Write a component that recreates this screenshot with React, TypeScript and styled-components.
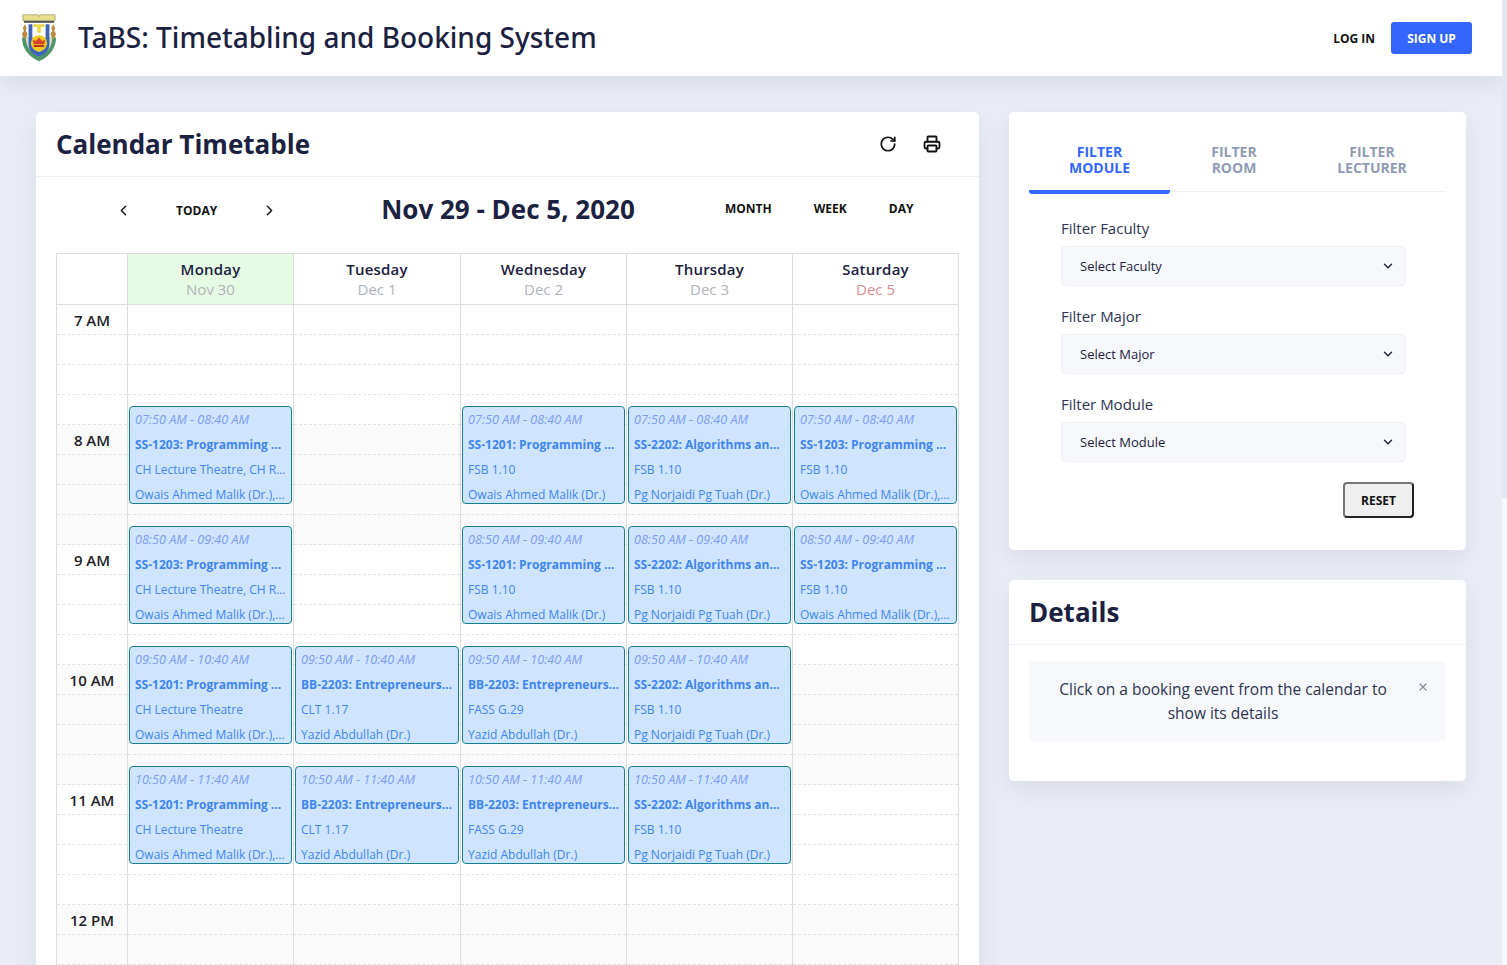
import React from "react";
import styled, { createGlobalStyle } from "styled-components";
import { ChevronDown, ChevronLeft, ChevronRight, Printer, RotateCw, X } from "lucide-react";

const GlobalStyle = createGlobalStyle`
  html, body {
    margin: 0;
    height: 100%;
    overflow: hidden;
  }
  * {
    box-sizing: border-box;
  }
  body {
    font-family: "Open Sans", "Noto Sans", sans-serif;
    color: #1b2140;
  }
`;

const Shell = styled.div`
  height: 100vh;
  display: flex;
  overflow: hidden;
`;

const Page = styled.div`
  flex: 1;
  min-width: 0;
  overflow: hidden;
  background: #eaedf6;
`;

const ScrollRail = styled.div`
  width: 5px;
  flex-shrink: 0;
  background: #f6f8fd;
`;

const ScrollThumb = styled.div`
  height: 498px;
  background: #e4e7f0;
`;

const TopBar = styled.header`
  height: 76px;
  background: white;
  display: flex;
  align-items: center;
  padding: 0 30px 0 21px;
  box-shadow: 0 4px 24px rgba(60, 70, 100, 0.14);
  position: relative;
`;

const Brand = styled.div`
  font-family: "Noto Sans", sans-serif;
  font-size: 28px;
  font-weight: 500;
  margin-left: 21px;
  margin-top: -2px;
  flex: 1;
`;

const LogIn = styled.button`
  background: none;
  border: none;
  font: 700 12px "Open Sans", sans-serif;
  color: #111;
  margin-right: 16px;
  padding: 0;
`;

const SignUp = styled.button`
  width: 81px;
  height: 32px;
  border: none;
  border-radius: 3px;
  background: #3366ff;
  color: white;
  font: 700 12px "Open Sans", sans-serif;
`;

const Content = styled.main`
  display: grid;
  grid-template-columns: 943px 457px;
  gap: 30px;
  align-items: start;
  padding: 36px 36px 40px;
`;

const Card = styled.section`
  background: white;
  border-radius: 5px;
  box-shadow: 0 8px 24px rgba(60, 70, 100, 0.1);
`;

const SideColumn = styled.div`
  display: flex;
  flex-direction: column;
  gap: 30px;
`;

const CardHead = styled.div`
  height: 65px;
  display: flex;
  align-items: center;
  padding: 0 25px 0 20px;
  border-bottom: 1px solid #eef0f7;
`;

const CardTitle = styled.h2`
  margin: 0;
  flex: 1;
  font-size: 26px;
  font-weight: 700;
`;

const IconButton = styled.button`
  background: none;
  border: none;
  padding: 0;
  width: 44px;
  display: flex;
  justify-content: center;
  color: #111;
`;

const CalendarBar = styled.div`
  height: 76px;
  padding: 0 20px 12px;
  display: grid;
  grid-template-columns: 272px 360px 1fr;
  align-items: center;
`;

const NavGroup = styled.div`
  display: flex;
  align-items: center;
  gap: 44px;
  padding-left: 59px;
  margin-top: 2px;
`;

const NavChevron = styled.button`
  background: none;
  border: none;
  padding: 0;
  display: flex;
  color: #111;
`;

const BarButton = styled.button`
  background: none;
  border: none;
  padding: 0;
  font: 700 12px "Open Sans", sans-serif;
  color: #111;
`;

const RangeTitle = styled.h3`
  margin: 0;
  font-size: 26px;
  font-weight: 700;
  text-align: center;
`;

const ViewGroup = styled.div`
  display: flex;
  align-items: center;
  gap: 42px;
  padding-left: 37px;
  margin-top: -2px;
`;

const CalendarWrap = styled.div`
  padding: 0 20px 20px;
`;

const Grid = styled.div`
  border: 1px solid #dddddd;
  border-bottom: none;
  display: grid;
  grid-template-columns: 70px 166px 167px 166px 166px 166px;
`;

const HeadCell = styled.div<{ $today?: boolean }>`
  height: 51px;
  border-left: 1px solid #dddddd;
  border-bottom: 1px solid #dddddd;
  background: ${(props) => (props.$today ? "#e5fbe3" : "white")};
  text-align: center;
  padding-top: 5px;
  &:first-child {
    border-left: none;
  }
`;

const DayName = styled.div`
  font-size: 15px;
  font-weight: 600;
  line-height: 20px;
  letter-spacing: 0.2px;
`;

const DayDate = styled.div<{ $weekend?: boolean }>`
  font-size: 15px;
  line-height: 21px;
  color: ${(props) => (props.$weekend ? "#d88c8c" : "#b0b3bb")};
`;

const Column = styled.div<{ $first?: boolean }>`
  position: relative;
  border-left: ${(props) => (props.$first ? "none" : "1px solid #dddddd")};
`;

const HourBand = styled.div<{ $shaded: boolean }>`
  background: ${(props) => (props.$shaded ? "#fafafa" : "white")};
`;

const Slot = styled.div`
  height: 30px;
  border-bottom: 1px dashed #e2e2e2;
`;

const HourLabel = styled.div`
  height: 30px;
  border-bottom: 1px dashed #e2e2e2;
  text-align: center;
  font-size: 15px;
  font-weight: 600;
  line-height: 31px;
  color: #1f1f28;
`;

const Event = styled.div<{ $top: number }>`
  position: absolute;
  top: ${(props) => props.$top}px;
  left: 1px;
  right: 1px;
  height: 98px;
  background: #cfe5ff;
  border: 1px solid #17808f;
  border-radius: 4px;
  padding: 0 5px;
  overflow: hidden;
`;

const EventLine = styled.div<{ $kind?: "time" | "title" }>`
  height: 25px;
  line-height: 25px;
  font-size: ${(props) => (props.$kind === "time" ? "12.6px" : "12px")};
  white-space: nowrap;
  overflow: hidden;
  color: ${(props) => (props.$kind === "time" ? "#7d9bf2" : "#3f86f2")};
  font-style: ${(props) => (props.$kind === "time" ? "italic" : "normal")};
  font-weight: ${(props) => (props.$kind === "title" ? 700 : 400)};
`;

const Tabs = styled.div`
  margin: 20px 20px 0;
  height: 60px;
  display: flex;
  border-bottom: 1px solid #eef0f7;
`;

const Tab = styled.button<{ $active?: boolean; $width: number }>`
  width: ${(props) => props.$width}px;
  height: 62px;
  background: none;
  border: none;
  border-bottom: 4px solid ${(props) => (props.$active ? "#3366ff" : "transparent")};
  border-radius: 3px;
  padding: 0 0 3px;
  flex-shrink: 0;
  font: 700 14px/16px "Open Sans", sans-serif;
  color: ${(props) => (props.$active ? "#3366ff" : "#8f9bb3")};
`;

const FilterForm = styled.div`
  padding: 26px 60px 32px 52px;
`;

const FieldLabel = styled.div`
  font-size: 15px;
  line-height: 20px;
  margin-bottom: 8px;
  color: #2c3350;
`;

const SelectWrap = styled.div`
  position: relative;
  margin-bottom: 20px;
`;

const Select = styled.select`
  width: 100%;
  height: 40px;
  appearance: none;
  background: #f7f8fc;
  border: 1px solid #eef0f7;
  border-radius: 4px;
  padding: 0 18px;
  font: 400 13px "Open Sans", sans-serif;
  color: #1b2140;
`;

const SelectChevron = styled.span`
  position: absolute;
  right: 11px;
  top: 13px;
  display: flex;
  color: #1b2140;
  pointer-events: none;
`;

const ResetRow = styled.div`
  display: flex;
  justify-content: flex-end;
  margin-right: -8px;
`;

const ResetButton = styled.button`
  width: 71px;
  height: 36px;
  background: #efefef;
  border: 2px solid;
  border-color: #767676 #222 #222 #767676;
  border-radius: 4px;
  font: 700 12px "Open Sans", sans-serif;
  color: #111;
`;

const DetailsBody = styled.div`
  padding: 16px 20px 40px;
`;

const Notice = styled.div`
  position: relative;
  height: 80px;
  background: #f7f8fc;
  border-radius: 4px;
  padding: 16px 49px 0 20px;
  text-align: center;
  font-size: 15.5px;
  line-height: 24px;
  color: #2c3350;
`;

const NoticeClose = styled.span`
  position: absolute;
  right: 17px;
  top: 20px;
  display: flex;
  color: #8a8f9c;
`;

const Logo = () => (
  <svg width="36" height="50" viewBox="0 0 38 51">
    <path d="M2 1h16l1 2 1-2h16v6H2z" fill="#e9df8c" stroke="#8b9560" strokeWidth="0.7" />
    <rect x="3" y="7.5" width="32" height="2" fill="#55574f" />
    <path d="M1 25c0 12 8 21 18 25 10-4 18-13 18-25z" fill="#4d9468" />
    <path d="M5 25c0 10 6 17 14 20 8-3 14-10 14-20z" fill="#cfe0c4" />
    <path d="M8 11h4v21c0 4 3 7 7 8 4-1 7-4 7-8V11h4v21c0 7-5 11-11 13C13 43 8 39 8 32z" fill="#3f63b6" />
    <path d="M13 11h12v3h-4v6h-4v-6h-4z" fill="#ecd64a" />
    <circle cx="19" cy="31" r="8.5" fill="#f0c91e" />
    <path d="M13.5 32h11l1-5-3 2-3.500-4-3.500 4-3-2z" fill="#d8402b" />
    <rect x="13.500" y="33" width="11" height="2" fill="#b32b1e" />
    <path d="M4 11l2 4-1 3 2 3-1 3-2 3-2-3-1-3 2-3-1-3z" fill="#b98e3e" />
    <path d="M34 11l2 4-1 3 2 3-1 3-2 3-2-3-1-3 2-3-1-3z" fill="#b98e3e" />
  </svg>
);

type Booking = { start: number; time: string; title: string; room: string; lecturer: string };

const OWAIS_MORE = "Owais Ahmed Malik (Dr.),…";
const OWAIS = "Owais Ahmed Malik (Dr.)";
const YAZID = "Yazid Abdullah (Dr.)";
const NORJAIDI = "Pg Norjaidi Pg Tuah (Dr.)";
const PROG_1203 = "SS-1203: Programming …";
const PROG_1201 = "SS-1201: Programming …";
const ALGO = "SS-2202: Algorithms an…";
const ENTRE = "BB-2203: Entrepreneurs…";

const TIMES: Record<number, string> = {
  0: "07:50 AM - 08:40 AM",
  1: "08:50 AM - 09:40 AM",
  2: "09:50 AM - 10:40 AM",
  3: "10:50 AM - 11:40 AM",
};

const book = (start: number, title: string, room: string, lecturer: string): Booking => ({
  start,
  time: TIMES[start],
  title,
  room,
  lecturer,
});

const days: { name: string; date: string; today?: boolean; weekend?: boolean; events: Booking[] }[] = [
  {
    name: "Monday",
    date: "Nov 30",
    today: true,
    events: [
      book(0, PROG_1203, "CH Lecture Theatre, CH R…", OWAIS_MORE),
      book(1, PROG_1203, "CH Lecture Theatre, CH R…", OWAIS_MORE),
      book(2, PROG_1201, "CH Lecture Theatre", OWAIS_MORE),
      book(3, PROG_1201, "CH Lecture Theatre", OWAIS_MORE),
    ],
  },
  {
    name: "Tuesday",
    date: "Dec 1",
    events: [book(2, ENTRE, "CLT 1.17", YAZID), book(3, ENTRE, "CLT 1.17", YAZID)],
  },
  {
    name: "Wednesday",
    date: "Dec 2",
    events: [
      book(0, PROG_1201, "FSB 1.10", OWAIS),
      book(1, PROG_1201, "FSB 1.10", OWAIS),
      book(2, ENTRE, "FASS G.29", YAZID),
      book(3, ENTRE, "FASS G.29", YAZID),
    ],
  },
  {
    name: "Thursday",
    date: "Dec 3",
    events: [0, 1, 2, 3].map((n) => book(n, ALGO, "FSB 1.10", NORJAIDI)),
  },
  {
    name: "Saturday",
    date: "Dec 5",
    weekend: true,
    events: [book(0, PROG_1203, "FSB 1.10", OWAIS_MORE), book(1, PROG_1203, "FSB 1.10", OWAIS_MORE)],
  },
];

const hours = ["7 AM", "8 AM", "9 AM", "10 AM", "11 AM", "12 PM"];

const filters = ["Faculty", "Major", "Module"];

const App = () => (
  <Shell>
    <GlobalStyle />
    <Page>
      <TopBar>
        <Logo />
        <Brand>TaBS: Timetabling and Booking System</Brand>
        <LogIn>LOG IN</LogIn>
        <SignUp>SIGN UP</SignUp>
      </TopBar>
      <Content>
        <Card>
          <CardHead>
            <CardTitle>Calendar Timetable</CardTitle>
            <IconButton>
              <RotateCw size={18} strokeWidth={2.3} />
            </IconButton>
            <IconButton>
              <Printer size={18} strokeWidth={2.4} />
            </IconButton>
          </CardHead>
          <CalendarBar>
            <NavGroup>
              <NavChevron>
                <ChevronLeft size={17} />
              </NavChevron>
              <BarButton>TODAY</BarButton>
              <NavChevron>
                <ChevronRight size={17} />
              </NavChevron>
            </NavGroup>
            <RangeTitle>Nov 29 - Dec 5, 2020</RangeTitle>
            <ViewGroup>
              <BarButton>MONTH</BarButton>
              <BarButton>WEEK</BarButton>
              <BarButton>DAY</BarButton>
            </ViewGroup>
          </CalendarBar>
          <CalendarWrap>
            <Grid>
              <HeadCell />
              {days.map((day) => (
                <HeadCell key={day.name} $today={day.today}>
                  <DayName>{day.name}</DayName>
                  <DayDate $weekend={day.weekend}>{day.date}</DayDate>
                </HeadCell>
              ))}
              <Column $first>
                {hours.map((hour, i) => (
                  <HourBand key={hour} $shaded={i % 2 === 1}>
                    <HourLabel>{hour}</HourLabel>
                    <Slot />
                    <Slot />
                    <Slot />
                  </HourBand>
                ))}
              </Column>
              {days.map((day) => (
                <Column key={day.name}>
                  {hours.map((hour, i) => (
                    <HourBand key={hour} $shaded={i % 2 === 1}>
                      <Slot />
                      <Slot />
                      <Slot />
                      <Slot />
                    </HourBand>
                  ))}
                  {day.events.map((event) => (
                    <Event key={event.start} $top={101 + event.start * 120}>
                      <EventLine $kind="time">{event.time}</EventLine>
                      <EventLine $kind="title">{event.title}</EventLine>
                      <EventLine>{event.room}</EventLine>
                      <EventLine>{event.lecturer}</EventLine>
                    </Event>
                  ))}
                </Column>
              ))}
            </Grid>
          </CalendarWrap>
        </Card>
        <SideColumn>
          <Card>
            <Tabs>
              <Tab $active $width={141}>
                FILTER
                <br />
                MODULE
              </Tab>
              <Tab $width={128}>
                FILTER
                <br />
                ROOM
              </Tab>
              <Tab $width={148}>
                FILTER
                <br />
                LECTURER
              </Tab>
            </Tabs>
            <FilterForm>
              {filters.map((filter) => (
                <div key={filter}>
                  <FieldLabel>Filter {filter}</FieldLabel>
                  <SelectWrap>
                    <Select>
                      <option>Select {filter}</option>
                    </Select>
                    <SelectChevron>
                      <ChevronDown size={14} strokeWidth={2.5} />
                    </SelectChevron>
                  </SelectWrap>
                </div>
              ))}
              <ResetRow>
                <ResetButton>RESET</ResetButton>
              </ResetRow>
            </FilterForm>
          </Card>
          <Card>
            <CardHead>
              <CardTitle>Details</CardTitle>
            </CardHead>
            <DetailsBody>
              <Notice>
                Click on a booking event from the calendar to show its details
                <NoticeClose>
                  <X size={12} strokeWidth={2.5} />
                </NoticeClose>
              </Notice>
            </DetailsBody>
          </Card>
        </SideColumn>
      </Content>
    </Page>
    <ScrollRail>
      <ScrollThumb />
    </ScrollRail>
  </Shell>
);

export default App;
